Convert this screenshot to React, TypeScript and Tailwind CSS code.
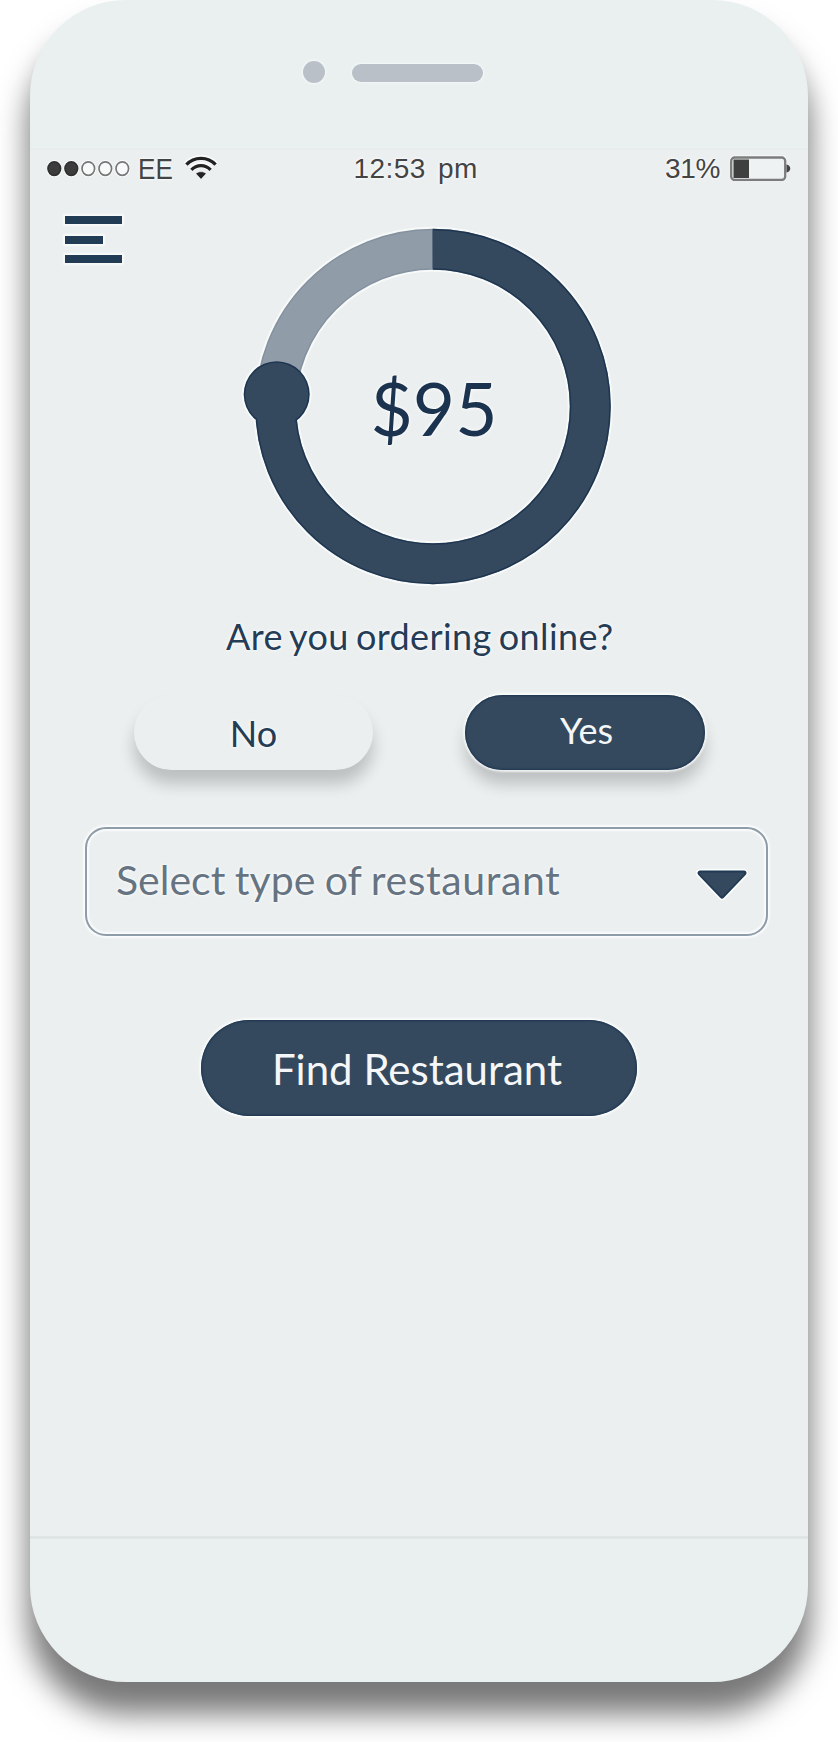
const HALO = 'shadow-[0_0_2px_2px_rgba(255,255,255,0.75),inset_0_0_2px_1px_#1d3550]';
const TEXT_HALO = '[text-shadow:0_0_2px_#fff,0_0_4px_#fff]';

function StatusBar() {
  return (
    <div className={`flex h-[39px] items-start pt-[3px] pl-[17px] font-['Liberation_Sans',sans-serif] text-[28px] leading-8 text-[#444] ${TEXT_HALO}`}>
      <div className="flex w-[306px] shrink-0 items-start">
        <svg className="mt-[3px] h-6 w-[88px]" viewBox="0 0 88 24">
          {[0, 1, 2, 3, 4].map((i) => (
            <g key={i}>
              <ellipse cx={7.3 + i * 17} cy="12.6" rx="8" ry="8.6" fill="#fff" opacity="0.8" />
              <ellipse cx={7.3 + i * 17} cy="12.6" rx="6.3" ry="6.8" fill={i < 2 ? '#3c3c3c' : '#f8fafa'} stroke={i < 2 ? '#303030' : '#777'} strokeWidth="1.7" />
            </g>
          ))}
        </svg>
        <span className="ml-[3px] w-[46px] origin-left scale-x-[0.9] text-[29px]">EE</span>
        <svg className="mt-[2px] h-[26px] w-[34px]" viewBox="0 0 34 26" fill="none">
          <g stroke="#fff" strokeWidth="6" opacity="0.7">
            <path d="M2 9.5C10 .8 24 .8 32 9.5" />
            <path d="M7.2 14.6c5.6-6 14-6 19.6 0" />
          </g>
          <g stroke="#222" strokeWidth="3.3">
            <path d="M2.4 9.7C10.2 1.2 23.8 1.2 31.6 9.7" />
            <path d="M7.4 14.8c5.4-5.6 13.8-5.6 19.2 0" />
          </g>
          <path d="M11.8 18.6c3-2.5 7.4-2.5 10.4 0L17 24.2z" fill="#222" stroke="#fff" strokeWidth="0.5" />
        </svg>
      </div>
      <span className="w-[311px] shrink-0 pl-[0.5px] tracking-[0.45px] whitespace-nowrap [word-spacing:4px]">12:53 pm</span>
      <span className="w-[66px] shrink-0 pl-px tracking-[-0.3px]">31%</span>
      <svg className="mt-px h-[27px] w-[64px] shrink-0" viewBox="0 0 64 27">
        <rect x="0" y="1.5" width="56.5" height="25.5" rx="4" fill="#fff" opacity="0.8" />
        <rect x="1.2" y="3.5" width="54" height="22.5" rx="3.5" fill="#eef2f2" stroke="#7c7c7c" strokeWidth="2.3" />
        <rect x="3.5" y="5.5" width="15.5" height="18.5" fill="#3f3f3f" />
        <path d="M56.5 10.5c5 1 5 7 0 8z" fill="#444" />
      </svg>
    </div>
  );
}

function BudgetDial() {
  return (
    <div className="ml-[207px] grid h-[374px] w-[380px] place-items-center">
      <svg className="col-start-1 row-start-1 h-[374px] w-[380px]" viewBox="0 0 380 374">
        <g fill="none">
          <circle cx="196" cy="187.5" r="157.3" stroke="#f8fafa" strokeWidth="45" />
          <circle cx="39.7" cy="175.3" r="35" fill="#f8fafa" />
          <circle cx="196" cy="187.5" r="157.3" stroke="#84919f" strokeWidth="41" />
          <circle cx="196" cy="187.5" r="157.3" stroke="#909ca8" strokeWidth="38" />
          <path d="M195.7 30.2A157.3 157.3 0 1 1 38.7 187.5" stroke="#1d3550" strokeWidth="41" />
          <circle cx="39.7" cy="175.3" r="33" fill="#1d3550" />
          <path d="M195.7 30.2A157.3 157.3 0 1 1 38.7 187.5L39 177" stroke="#34495e" strokeWidth="38" />
          <circle cx="39.7" cy="175.3" r="31.5" fill="#34495e" />
        </g>
      </svg>
      <span className={`col-start-1 row-start-1 mt-[4px] ml-[14px] text-[73px] leading-none text-[#1b334e] ${TEXT_HALO}`}>$95</span>
    </div>
  );
}

export default function App() {
  return (
    <div className="h-[1742px] w-[838px] overflow-hidden bg-white px-[30px] font-[Lato,sans-serif]">
      <div className="flex h-[1682px] w-[778px] flex-col overflow-hidden rounded-[96px] bg-[#eaf0f0] shadow-[0_30px_30px_2px_rgba(0,0,0,0.53)]">
        <header className="flex h-[148px] shrink-0 items-start pt-[61px] pl-[273px]">
          <div className="size-[22px] rounded-full bg-[#b9c0c8] shadow-[0_0_2px_1px_#f4f8f8]" />
          <div className="mt-[3px] ml-[27px] h-[17.5px] w-[131px] rounded-full bg-[#b9c0c8] shadow-[0_0_2px_1px_#f4f8f8]" />
        </header>
        <main className="flex h-[1388px] shrink-0 flex-col border-t-2 border-[#e7ecec] bg-[#ebeff0]">
          <StatusBar />
          <div className="flex h-[30px] flex-col pt-[27px] pl-[35px]">
            <div className="flex h-[47px] shrink-0 flex-col justify-between">
              <div className="h-2 w-[57px] bg-[#233c56] shadow-[0_0_2px_2px_rgba(255,255,255,0.7)]" />
              <div className="h-2 w-[38px] bg-[#233c56] shadow-[0_0_2px_2px_rgba(255,255,255,0.7)]" />
              <div className="h-2 w-[57px] bg-[#233c56] shadow-[0_0_2px_2px_rgba(255,255,255,0.7)]" />
            </div>
          </div>
          <BudgetDial />
          <p className={`mt-[21px] ml-[196px] h-[44px] text-[36px] leading-[44px] tracking-[0.4px] whitespace-nowrap text-[#253c56] [word-spacing:-2.5px] ${TEXT_HALO}`}>Are you ordering online?</p>
          <div className="mt-[37px] ml-[104px] flex gap-[92px]">
            <button className={`h-[75px] w-[239px] rounded-full bg-[#ebeff0] text-[36px] leading-none text-[#253c56] shadow-[0_14px_16px_rgba(0,0,0,0.2)] ${TEXT_HALO}`}>No</button>
            <button className="h-[75px] w-[240px] rounded-full bg-[#34495e] pb-[6px] pl-[3px] text-[36px] leading-none text-[#f4f6f8] shadow-[0_0_2px_2px_rgba(255,255,255,0.75),0_14px_16px_rgba(0,0,0,0.2),inset_0_0_2px_1px_#1d3550]">Yes</button>
          </div>
          <div className="mt-[57px] ml-[55px] flex h-[109px] w-[683px] items-center justify-between rounded-[21px] border-2 border-[#8f9ca9] pr-[18px] pl-[29px] shadow-[0_0_2px_2px_rgba(255,255,255,0.8),inset_0_0_2px_2px_rgba(255,255,255,0.8)]">
            <span className={`pb-[4px] text-[41px] leading-none whitespace-nowrap text-[#667482] [word-spacing:-1px] ${TEXT_HALO}`}>
              Select type of <span className="tracking-[0.6px]">restaurant</span>
            </span>
            <svg className="mt-[6px] h-[34px] w-[54px]" viewBox="0 0 54 34" strokeLinejoin="round">
              <path d="M6 5H50L28 28Z" fill="#fff" stroke="#fbfcfc" strokeWidth="8.5" />
              <path d="M6 5H50L28 28Z" fill="#213a54" stroke="#213a54" strokeWidth="5" />
              <path d="M6.8 5.5H49.2L28 27.5Z" fill="#34495e" stroke="#34495e" strokeWidth="2" />
            </svg>
          </div>
          <button className={`mt-[84px] ml-[171px] h-[96px] w-[436px] rounded-full bg-[#34495e] pt-[1px] pr-[4px] text-[42px] leading-none text-[#f4f6f8] ${HALO}`}>Find Restaurant</button>
        </main>
        <footer className="h-[146px] shrink-0 border-t-[3px] border-[#dfe5e5]" />
      </div>
    </div>
  );
}
